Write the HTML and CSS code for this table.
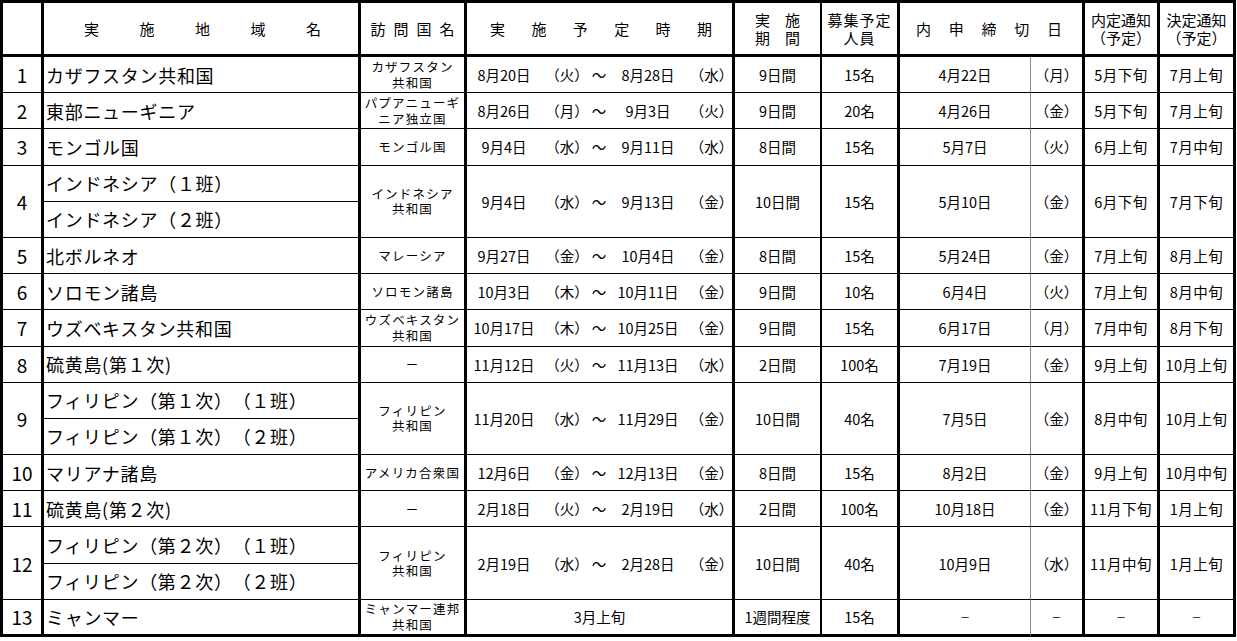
FILE: index.html
```html
<!DOCTYPE html>
<html lang="ja">
<head>
<meta charset="utf-8">
<title>実施予定</title>
<link rel="stylesheet" href="styles.css">
</head>
<body>
<table class="schedule">
  <colgroup>
    <col class="w1"><col class="w2"><col class="w3"><col class="w4"><col class="w5">
    <col class="w6"><col class="w7"><col class="w8"><col class="w9"><col class="w10">
  </colgroup>
  <thead>
    <tr class="head">
      <th class="num"></th>
      <th><div class="spread spread-area"><span>実</span><span>施</span><span>地</span><span>域</span><span>名</span></div></th>
      <th><span class="visit">訪問国名</span></th>
      <th><div class="spread spread-period"><span>実</span><span>施</span><span>予</span><span>定</span><span>時</span><span>期</span></div></th>
      <th class="thin"><div class="two">実&emsp;施<br>期&emsp;間</div></th>
      <th><div class="two tight">募集予定<br>人員</div></th>
      <th colspan="2"><div class="spread spread-dead"><span>内</span><span>申</span><span>締</span><span>切</span><span>日</span></div></th>
      <th><div class="two">内定通知<br>（予定）</div></th>
      <th><div class="two">決定通知<br>（予定）</div></th>
    </tr>
  </thead>
  <tbody>
    <tr class="row">
      <td class="num">1</td><td class="name">カザフスタン共和国</td><td class="country"><div class="cl">カザフスタン</div><div class="cl">共和国</div></td>
      <td><div class="span"><span>8月20日</span><span>（火）</span><span>～</span><span>8月28日</span><span>（水）</span></div></td>
      <td class="thin txt">9日間</td><td class="txt">15名</td><td class="grey txt">4月22日</td><td class="txt">（月）</td><td class="txt note">5月下旬</td><td class="txt note">7月上旬</td>
    </tr>
    <tr class="row">
      <td class="num">2</td><td class="name">東部ニューギニア</td><td class="country"><div class="cl">パプアニューギ</div><div class="cl">ニア独立国</div></td>
      <td><div class="span"><span>8月26日</span><span>（月）</span><span>～</span><span>9月3日</span><span>（火）</span></div></td>
      <td class="thin txt">9日間</td><td class="txt">20名</td><td class="grey txt">4月26日</td><td class="txt">（金）</td><td class="txt note">5月下旬</td><td class="txt note">7月上旬</td>
    </tr>
    <tr class="row">
      <td class="num">3</td><td class="name">モンゴル国</td><td class="country">モンゴル国</td>
      <td><div class="span"><span>9月4日</span><span>（水）</span><span>～</span><span>9月11日</span><span>（水）</span></div></td>
      <td class="thin txt">8日間</td><td class="txt">15名</td><td class="grey txt">5月7日</td><td class="txt">（火）</td><td class="txt note">6月上旬</td><td class="txt note">7月中旬</td>
    </tr>
    <tr class="row">
      <td class="num" rowspan="2">4</td><td class="name sub">インドネシア（１班）</td><td class="country" rowspan="2"><div class="cl">インドネシア</div><div class="cl">共和国</div></td>
      <td rowspan="2"><div class="span"><span>9月4日</span><span>（水）</span><span>～</span><span>9月13日</span><span>（金）</span></div></td>
      <td class="thin txt" rowspan="2">10日間</td><td class="txt" rowspan="2">15名</td><td class="grey txt" rowspan="2">5月10日</td><td class="txt" rowspan="2">（金）</td><td class="txt note" rowspan="2">6月下旬</td><td class="txt note" rowspan="2">7月下旬</td>
    </tr>
    <tr class="row">
      <td class="name">インドネシア（２班）</td>
    </tr>
    <tr class="row">
      <td class="num">5</td><td class="name">北ボルネオ</td><td class="country">マレーシア</td>
      <td><div class="span"><span>9月27日</span><span>（金）</span><span>～</span><span>10月4日</span><span>（金）</span></div></td>
      <td class="thin txt">8日間</td><td class="txt">15名</td><td class="grey txt">5月24日</td><td class="txt">（金）</td><td class="txt note">7月上旬</td><td class="txt note">8月上旬</td>
    </tr>
    <tr class="row">
      <td class="num">6</td><td class="name">ソロモン諸島</td><td class="country">ソロモン諸島</td>
      <td><div class="span"><span>10月3日</span><span>（木）</span><span>～</span><span>10月11日</span><span>（金）</span></div></td>
      <td class="thin txt">9日間</td><td class="txt">10名</td><td class="grey txt">6月4日</td><td class="txt">（火）</td><td class="txt note">7月上旬</td><td class="txt note">8月中旬</td>
    </tr>
    <tr class="row">
      <td class="num">7</td><td class="name">ウズベキスタン共和国</td><td class="country"><div class="cl">ウズベキスタン</div><div class="cl">共和国</div></td>
      <td><div class="span"><span>10月17日</span><span>（木）</span><span>～</span><span>10月25日</span><span>（金）</span></div></td>
      <td class="thin txt">9日間</td><td class="txt">15名</td><td class="grey txt">6月17日</td><td class="txt">（月）</td><td class="txt note">7月中旬</td><td class="txt note">8月下旬</td>
    </tr>
    <tr class="row">
      <td class="num">8</td><td class="name">硫黄島(第１次)</td><td class="country dash">－</td>
      <td><div class="span"><span>11月12日</span><span>（火）</span><span>～</span><span>11月13日</span><span>（水）</span></div></td>
      <td class="thin txt">2日間</td><td class="txt">100名</td><td class="grey txt">7月19日</td><td class="txt">（金）</td><td class="txt note">9月上旬</td><td class="txt note">10月上旬</td>
    </tr>
    <tr class="row">
      <td class="num" rowspan="2">9</td><td class="name sub">フィリピン（第１次）（１班）</td><td class="country" rowspan="2"><div class="cl">フィリピン</div><div class="cl">共和国</div></td>
      <td rowspan="2"><div class="span"><span>11月20日</span><span>（水）</span><span>～</span><span>11月29日</span><span>（金）</span></div></td>
      <td class="thin txt" rowspan="2">10日間</td><td class="txt" rowspan="2">40名</td><td class="grey txt" rowspan="2">7月5日</td><td class="txt" rowspan="2">（金）</td><td class="txt note" rowspan="2">8月中旬</td><td class="txt note" rowspan="2">10月上旬</td>
    </tr>
    <tr class="row">
      <td class="name">フィリピン（第１次）（２班）</td>
    </tr>
    <tr class="row">
      <td class="num">10</td><td class="name">マリアナ諸島</td><td class="country">アメリカ合衆国</td>
      <td><div class="span"><span>12月6日</span><span>（金）</span><span>～</span><span>12月13日</span><span>（金）</span></div></td>
      <td class="thin txt">8日間</td><td class="txt">15名</td><td class="grey txt">8月2日</td><td class="txt">（金）</td><td class="txt note">9月上旬</td><td class="txt note">10月中旬</td>
    </tr>
    <tr class="row">
      <td class="num">11</td><td class="name">硫黄島(第２次)</td><td class="country dash">－</td>
      <td><div class="span"><span>2月18日</span><span>（火）</span><span>～</span><span>2月19日</span><span>（水）</span></div></td>
      <td class="thin txt">2日間</td><td class="txt">100名</td><td class="grey txt">10月18日</td><td class="txt">（金）</td><td class="txt note">11月下旬</td><td class="txt note">1月上旬</td>
    </tr>
    <tr class="row">
      <td class="num" rowspan="2">12</td><td class="name sub">フィリピン（第２次）（１班）</td><td class="country" rowspan="2"><div class="cl">フィリピン</div><div class="cl">共和国</div></td>
      <td rowspan="2"><div class="span"><span>2月19日</span><span>（水）</span><span>～</span><span>2月28日</span><span>（金）</span></div></td>
      <td class="thin txt" rowspan="2">10日間</td><td class="txt" rowspan="2">40名</td><td class="grey txt" rowspan="2">10月9日</td><td class="txt" rowspan="2">（水）</td><td class="txt note" rowspan="2">11月中旬</td><td class="txt note" rowspan="2">1月上旬</td>
    </tr>
    <tr class="row">
      <td class="name">フィリピン（第２次）（２班）</td>
    </tr>
    <tr class="row last">
      <td class="num">13</td><td class="name">ミャンマー</td><td class="country"><div class="cl">ミャンマー連邦</div><div class="cl">共和国</div></td>
      <td class="txt">3月上旬</td>
      <td class="thin txt">1週間程度</td><td class="txt">15名</td><td class="grey txt dash-s">－</td><td class="txt dash-s">－</td><td class="txt dash-s">－</td><td class="txt dash-s">－</td>
    </tr>
  </tbody>
</table>
</body>
</html>
```

FILE: styles.css
```css
html, body {
  margin: 0;
  padding: 0;
  background: #ffffff;
}

body {
  font-family: "Noto Sans CJK JP", "Noto Sans", sans-serif;
  color: #000;
  text-spacing-trim: space-all;
}

.schedule {
  border-collapse: separate;
  border-spacing: 0;
  table-layout: fixed;
  width: 1236px;
  border-top: 3px solid #000;
  border-left: 3px solid #000;
}

.w1 { width: 41px; }
.w2 { width: 317px; }
.w3 { width: 106px; }
.w4 { width: 268px; }
.w5 { width: 87px; }
.w6 { width: 78px; }
.w7 { width: 131px; }
.w8 { width: 54px; }
.w9 { width: 75px; }
.w10 { width: 76px; }

.schedule th,
.schedule td {
  padding: 0;
  border-right: 3px solid #000;
  border-bottom: 1px solid #000;
  text-align: center;
  vertical-align: middle;
  font-weight: normal;
  white-space: nowrap;
  overflow: hidden;
  box-sizing: border-box;
}

.schedule th {
  border-bottom: 3px solid #000;
  font-size: 15px;
}

.schedule .thin {
  border-right-width: 2px;
}

.schedule .grey {
  border-right: 1px solid #8a8a8a;
}

.head { height: 54px; }
.row { height: 36.2px; }
.row.last { height: 37px; }
.row.last td { border-bottom-width: 3px; }

.spread {
  display: flex;
  justify-content: space-between;
  line-height: 20px;
}

.spread-area { padding: 0 37px 0 40px; }
.spread-period { padding: 0 20px 0 23px; }
.spread-dead { padding: 0 20px 0 16px; }

.visit {
  letter-spacing: 8px;
  margin-right: -8px;
}

.two {
  line-height: 18px;
}

.tight { letter-spacing: 1px; }

.num {
  font-size: 19px;
}

.name {
  text-align: left !important;
  padding-left: 2px !important;
  font-size: 18px;
  letter-spacing: 0.7px;
}

.country {
  font-size: 12.5px;
  line-height: 15.5px;
  letter-spacing: 1.2px;
}

.cl {
  height: 15.5px;
  line-height: 15.5px;
}

.country.dash { font-size: 13px; }

.txt {
  font-size: 14.5px;
}

.note { letter-spacing: 0.5px; }

.dash-s { font-size: 10px; }

.span {
  display: grid;
  grid-template-columns: 74px 52px 12px 86px minmax(0, 1fr);
  font-size: 14.5px;
}

.span span {
  justify-self: center;
  white-space: nowrap;
}
```
